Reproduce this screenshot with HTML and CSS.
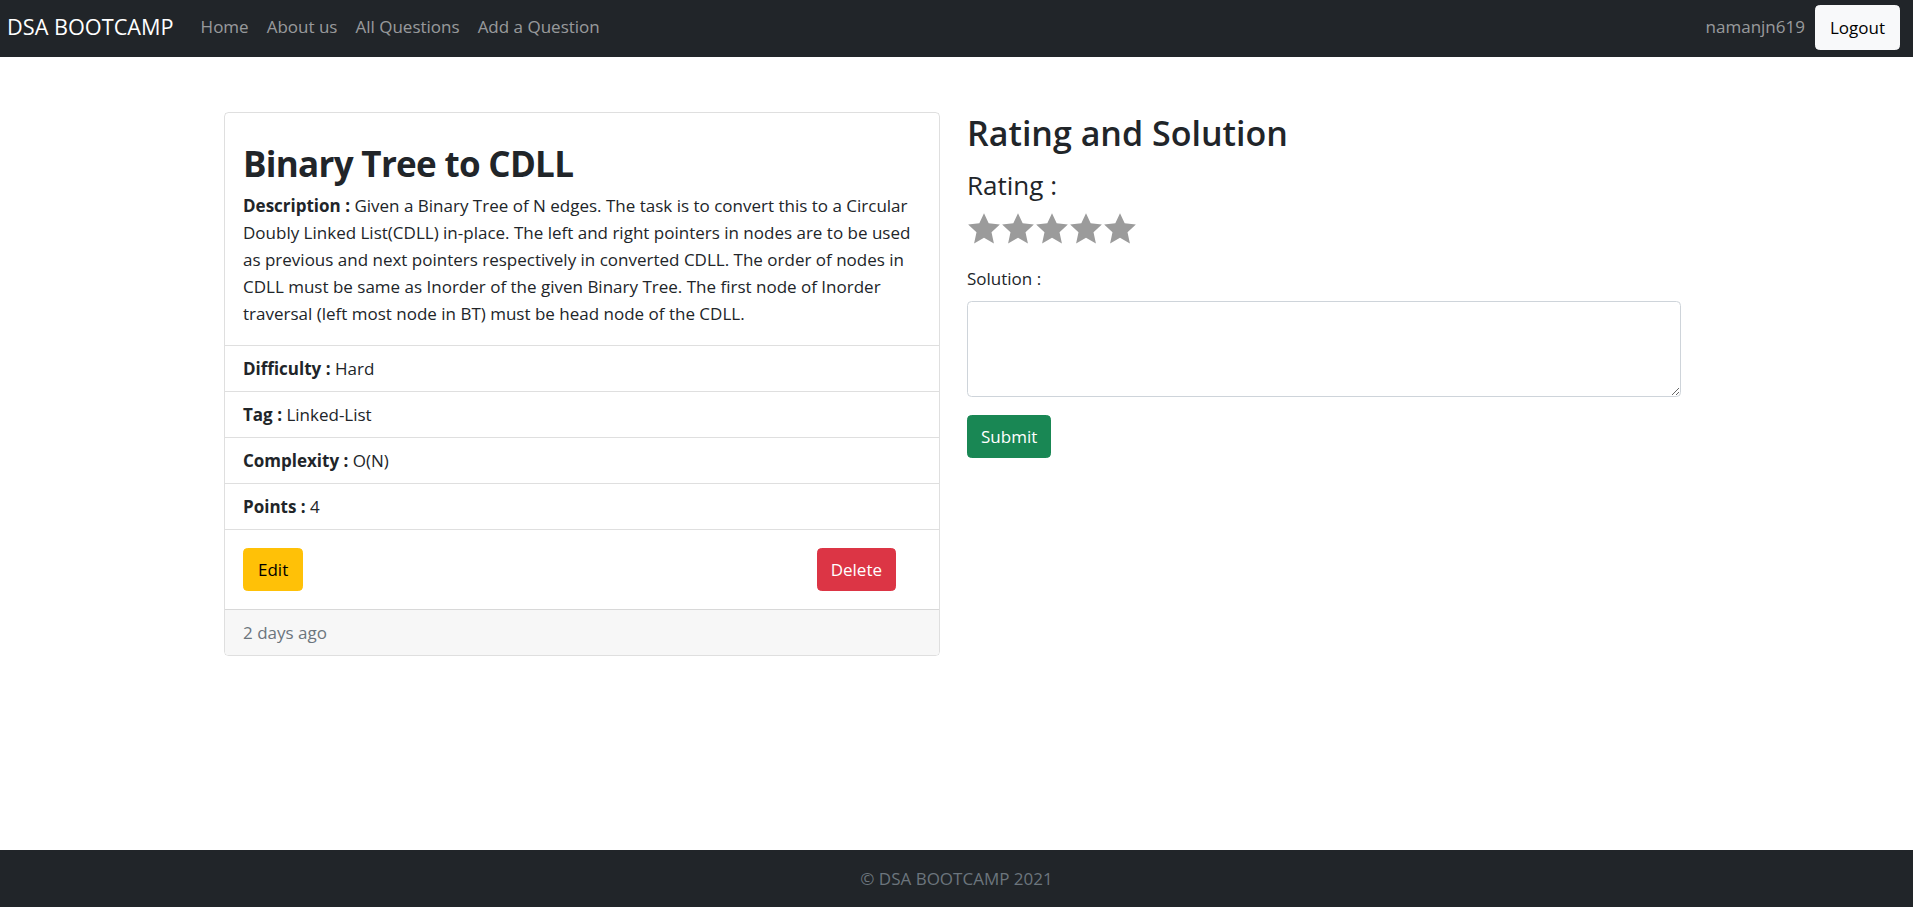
FILE: index.html
```html
<!DOCTYPE html>
<html lang="en">
<head>
<meta charset="utf-8">
<title>DSA BOOTCAMP</title>
<link rel="stylesheet" href="styles.css">
</head>
<body>
<nav class="navbar">
  <div class="nav-left">
    <a class="brand" href="#">DSA BOOTCAMP</a>
    <a class="nav-link" href="#">Home</a>
    <a class="nav-link" href="#">About us</a>
    <a class="nav-link" href="#">All Questions</a>
    <a class="nav-link" href="#">Add a Question</a>
  </div>
  <div class="nav-right">
    <span class="user">namanjn619</span>
    <a class="btn btn-light" href="#">Logout</a>
  </div>
</nav>

<main class="main">
  <div class="row">
    <div class="col-left">
      <div class="card">
        <div class="card-body">
          <h1 class="card-title">Binary Tree to CDLL</h1>
          <p class="card-text"><b>Description :</b> Given a Binary Tree of N edges. The task is to convert this to a Circular Doubly Linked List(CDLL) in-place. The left and right pointers in nodes are to be used as previous and next pointers respectively in converted CDLL. The order of nodes in CDLL must be same as Inorder of the given Binary Tree. The first node of Inorder traversal (left most node in BT) must be head node of the CDLL.</p>
        </div>
        <ul class="list-group">
          <li class="list-item"><b>Difficulty :</b> <span class="val">Hard</span></li>
          <li class="list-item"><b>Tag :</b> <span class="val">Linked-List</span></li>
          <li class="list-item"><b>Complexity :</b> <span class="val">O(N)</span></li>
          <li class="list-item"><b>Points :</b> <span class="val">4</span></li>
        </ul>
        <div class="card-body actions">
          <a class="btn btn-warning" href="#">Edit</a>
          <button class="btn btn-danger" type="button">Delete</button>
        </div>
        <div class="card-footer">2 days ago</div>
      </div>
    </div>
    <div class="col-right">
      <h2 class="section-title">Rating and Solution</h2>
      <h4 class="rating-title">Rating :</h4>
      <div class="stars">
        <svg class="star" viewBox="0 0 24 24"><polygon points="12,0.8 15.3,8 23.2,8.9 17.3,14.3 19,22.2 12,18.2 5,22.2 6.7,14.3 0.8,8.9 8.7,8"/></svg>
        <svg class="star" viewBox="0 0 24 24"><polygon points="12,0.8 15.3,8 23.2,8.9 17.3,14.3 19,22.2 12,18.2 5,22.2 6.7,14.3 0.8,8.9 8.7,8"/></svg>
        <svg class="star" viewBox="0 0 24 24"><polygon points="12,0.8 15.3,8 23.2,8.9 17.3,14.3 19,22.2 12,18.2 5,22.2 6.7,14.3 0.8,8.9 8.7,8"/></svg>
        <svg class="star" viewBox="0 0 24 24"><polygon points="12,0.8 15.3,8 23.2,8.9 17.3,14.3 19,22.2 12,18.2 5,22.2 6.7,14.3 0.8,8.9 8.7,8"/></svg>
        <svg class="star" viewBox="0 0 24 24"><polygon points="12,0.8 15.3,8 23.2,8.9 17.3,14.3 19,22.2 12,18.2 5,22.2 6.7,14.3 0.8,8.9 8.7,8"/></svg>
      </div>
      <label class="form-label" for="sol">Solution :</label>
      <textarea class="form-control" id="sol" rows="3"></textarea>
      <button class="btn btn-success" type="button">Submit</button>
    </div>
  </div>
</main>

<footer class="footer">© DSA BOOTCAMP 2021</footer>
</body>
</html>
```

FILE: styles.css
```css
* { box-sizing: border-box; }

html, body { height: 100%; }

body {
  margin: 0;
  font-family: "Open Sans", "Noto Sans", sans-serif;
  font-size: 17px;
  line-height: 27px;
  color: #212529;
  background: #fff;
  display: flex;
  flex-direction: column;
  min-height: 907px;
}

a { text-decoration: none; }

/* Navbar */
.navbar {
  height: 57px;
  background: #212529;
  display: flex;
  align-items: center;
  justify-content: space-between;
  padding: 0 13px 4px 7px;
  flex-shrink: 0;
}
.nav-left, .nav-right { display: flex; align-items: center; }
.brand {
  color: #fff;
  font-size: 21.7px;
  margin-right: 18px;
}
.nav-link {
  color: rgba(255,255,255,.55);
  padding: 0 9px;
}
.user {
  color: rgba(255,255,255,.55);
  margin-right: 10px;
}
.nav-right .btn { margin-top: 2px; }

/* Buttons */
.btn {
  display: inline-block;
  font-family: inherit;
  font-size: 17px;
  line-height: 27px;
  padding: 7px 13px;
  border: 1px solid transparent;
  border-radius: 4.5px;
  cursor: pointer;
}
.btn-light { background: #f8f9fa; border-color: #f8f9fa; color: #000; padding: 8px 14px; }
.btn-warning { background: #ffc107; border-color: #ffc107; color: #000; padding: 7px 14px; }
.btn-danger { background: #dc3545; border-color: #dc3545; color: #fff; }
.btn-success { background: #198754; border-color: #198754; color: #fff; }

/* Layout */
.main {
  flex: 1 0 auto;
  padding: 55px 0 40px 224px;
}
.row {
  display: grid;
  grid-template-columns: 716px 714px;
  column-gap: 27px;
  align-items: start;
}

/* Card */
.card {
  border: 1px solid rgba(0,0,0,.125);
  border-radius: 4.5px;
  overflow: hidden;
}
.card-body { padding: 18px; }
.card-title {
  margin: 11px 0 7px;
  font-size: 35px;
  line-height: 43px;
  font-weight: 700;
  letter-spacing: -0.7px;
}
.card-text { margin: 0; }
.list-group {
  list-style: none;
  margin: 0;
  padding: 0;
  border-top: 1px solid rgba(0,0,0,.125);
}
.list-item {
  padding: 9px 18px;
  border-bottom: 1px solid rgba(0,0,0,.125);
}
.actions {
  display: flex;
  justify-content: space-between;
  padding-right: 43px;
}
.card-footer {
  padding: 9px 18px;
  background: #f7f7f7;
  border-top: 1px solid rgba(0,0,0,.125);
  color: #6c757d;
}

/* Right column */
.section-title {
  margin: 0 0 14px;
  font-size: 34px;
  line-height: 43px;
  font-weight: 600;
}
.rating-title {
  margin: 0 0 11px;
  font-size: 26px;
  line-height: 32px;
  font-weight: 500;
}
.stars { display: flex; height: 34px; margin-bottom: 19px; }
.star { width: 34px; height: 34px; fill: #9b9b9b; }
.form-label { display: block; margin-bottom: 9px; font-size: 17px; }
.form-control {
  display: block;
  width: 100%;
  height: 96px;
  padding: 7px 13px;
  border: 1px solid #ced4da;
  border-radius: 4.5px;
  font-family: inherit;
  font-size: 17px;
  margin-bottom: 18px;
  resize: vertical;
}

/* Footer */
.footer {
  flex-shrink: 0;
  height: 57px;
  background: #212529;
  color: #6c757d;
  text-align: center;
  line-height: 57px;
}
```
